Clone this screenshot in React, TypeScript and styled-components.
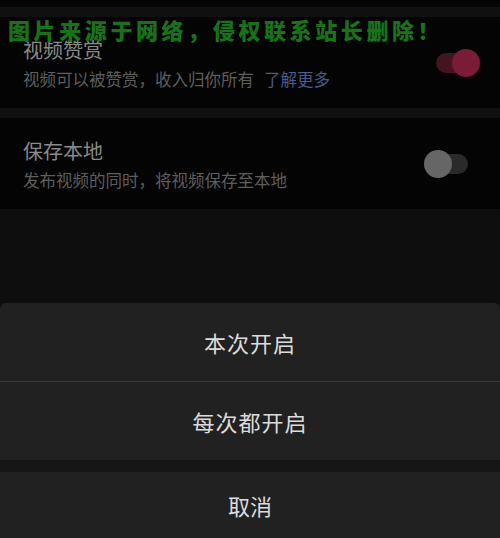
import styled, { createGlobalStyle } from 'styled-components';

const GlobalStyle = createGlobalStyle`
	html, body {
		margin: 0;
		padding: 0;
		background: #0e0e0e;
	}
	body {
		font-family: 'Noto Sans CJK SC', 'Noto Sans', sans-serif;
	}
`;

const Screen = styled.div`
	position: relative;
	width: 500px;
	height: 538px;
	overflow: hidden;
	background: #0e0e0e;
	display: flex;
	flex-direction: column;
`;

const TopEdge = styled.div`
	height: 7px;
	background: #050505;
`;

const Gap = styled.div<{ h: number }>`
	height: ${(p) => p.h}px;
	background: #101010;
`;

const Row = styled.div`
	height: 91px;
	background: #040404;
	display: flex;
	align-items: center;
	justify-content: space-between;
	padding: 0 32px 0 23px;
	box-sizing: border-box;
`;

const Text = styled.div`
	display: flex;
	flex-direction: column;
	gap: 6px;
	margin-top: 1px;
	.title {
		font-size: 20px;
		line-height: 26px;
		color: #8a8a8a;
	}
	.sub {
		font-size: 16.5px;
		line-height: 20px;
		color: #5e5e5e;
	}
	.link {
		color: #4b5a8c;
		margin-left: 10px;
	}
`;

const Toggle = styled.div<{ on?: boolean }>`
	position: relative;
	width: 32px;
	height: 20px;
	border-radius: 10px;
	background: ${(p) => (p.on ? '#461421' : '#2a2a2a')};

	&::after {
		content: '';
		position: absolute;
		top: -4px;
		${(p) => (p.on ? 'right: -12px;' : 'left: -12px;')}
		width: 28px;
		height: 28px;
		border-radius: 50%;
		background: ${(p) => (p.on ? '#7a1b37' : '#666666')};
	}
`;

const Spacer = styled.div`
	flex: 1;
`;

const Sheet = styled.div`
	background: #212121;
	border-radius: 6px 6px 0 0;
	display: flex;
	flex-direction: column;
`;

const Option = styled.div<{ h: number }>`
	height: ${(p) => p.h}px;
	display: flex;
	align-items: center;
	justify-content: center;
	font-size: 22px;
	color: #dcdcdc;
	letter-spacing: 1px;
`;

const Divider = styled.div`
	height: 1px;
	background: #3c3c3c;
`;

const SheetGap = styled.div`
	height: 12px;
	background: #161616;
`;

const Cancel = styled.div`
	height: 66px;
	background: #212121;
	display: flex;
	align-items: center;
	justify-content: center;
	font-size: 22px;
	color: #dcdcdc;
`;

const Watermark = styled.div`
	position: absolute;
	left: 8px;
	top: 14px;
	font-family: 'Noto Sans CJK SC', sans-serif;
	font-weight: 900;
	font-size: 22px;
	line-height: 30px;
	letter-spacing: 3.6px;
	color: #187318;
`;

export default function App() {
	return (
		<>
			<GlobalStyle />
			<Screen>
				<TopEdge />
				<Gap h={10} />
				<Row>
					<Text>
						<div className="title">视频赞赏</div>
						<div className="sub">
							视频可以被赞赏，收入归你所有<span className="link">了解更多</span>
						</div>
					</Text>
					<Toggle on />
				</Row>
				<Gap h={10} />
				<Row>
					<Text>
						<div className="title">保存本地</div>
						<div className="sub">发布视频的同时，将视频保存至本地</div>
					</Text>
					<Toggle />
				</Row>
				<Spacer />
				<Sheet>
					<Option h={78}>本次开启</Option>
					<Divider />
					<Option h={78}>每次都开启</Option>
				</Sheet>
				<SheetGap />
				<Cancel>取消</Cancel>
				<Watermark>图片来源于网络，侵权联系站长删除！</Watermark>
			</Screen>
		</>
	);
}
